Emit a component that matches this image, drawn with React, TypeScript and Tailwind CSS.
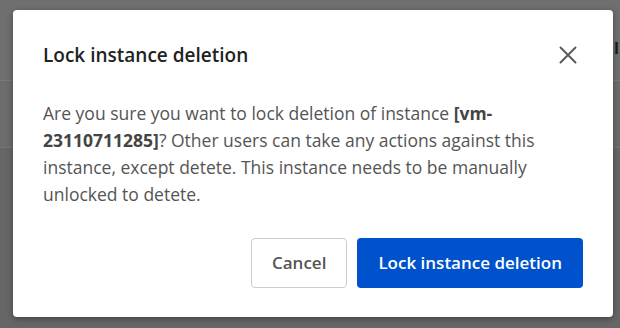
function Backdrop() {
  return (
    <div className="flex h-[328px] w-[620px] flex-col overflow-hidden bg-[#676767]">
      <div className="flex h-[81px] shrink-0 items-start justify-end border-b border-[#7a7a7a] bg-[#6f6f6f]">
        <span className="mr-[1px] mt-[38px] text-[16px] font-bold leading-[20px] text-[#1a1a2a]">ul</span>
      </div>
      <div className="h-[67px] shrink-0 border-b border-[#757575] bg-[#6c6c6c]" />
      <div className="flex-1 bg-[#666666]" />
    </div>
  );
}

export default function App() {
  return (
    <div className="relative h-[328px] w-[620px] overflow-hidden font-['Open_Sans',sans-serif]">
      <Backdrop />
      <div className="absolute left-[13px] top-[10px] w-[600px] rounded-[4px] bg-white px-[30px] pb-[29px] pt-[31px] shadow-[0_2px_6px_rgba(0,0,0,0.35)]">
        <div className="flex items-center justify-between">
          <h2 className="text-[19px] font-semibold leading-[28px] text-[#222222]">
            Lock instance deletion
          </h2>
          <button type="button" className="mr-[5px] flex h-[28px] w-[20px] items-center justify-center text-[#5a5a5a]">
            <svg width="18" height="18" viewBox="0 0 18 18" fill="none" stroke="currentColor" strokeWidth="2" strokeLinecap="round">
              <path d="M1.5 1.5L16.5 16.5M16.5 1.5L1.5 16.5" />
            </svg>
          </button>
        </div>
        <p className="mt-[31px] w-[512px] text-[17.5px] leading-[27px] text-[#555555]">
          Are you sure you want to lock deletion of instance{" "}
          <span className="font-bold text-[#444444]">[vm-23110711285]</span>? Other users can take any actions
          against this instance, except detete. This instance needs to be manually unlocked to detete.
        </p>
        <div className="mt-[30px] flex justify-end gap-[10px]">
          <button
            type="button"
            className="h-[50px] rounded-[4px] border border-[#cccccc] bg-white px-[20px] text-[17px] font-semibold text-[#555555]"
          >
            Cancel
          </button>
          <button
            type="button"
            className="h-[50px] rounded-[4px] bg-[#0052cc] px-[21px] text-[17px] font-semibold text-white"
          >
            Lock instance deletion
          </button>
        </div>
      </div>
    </div>
  );
}
